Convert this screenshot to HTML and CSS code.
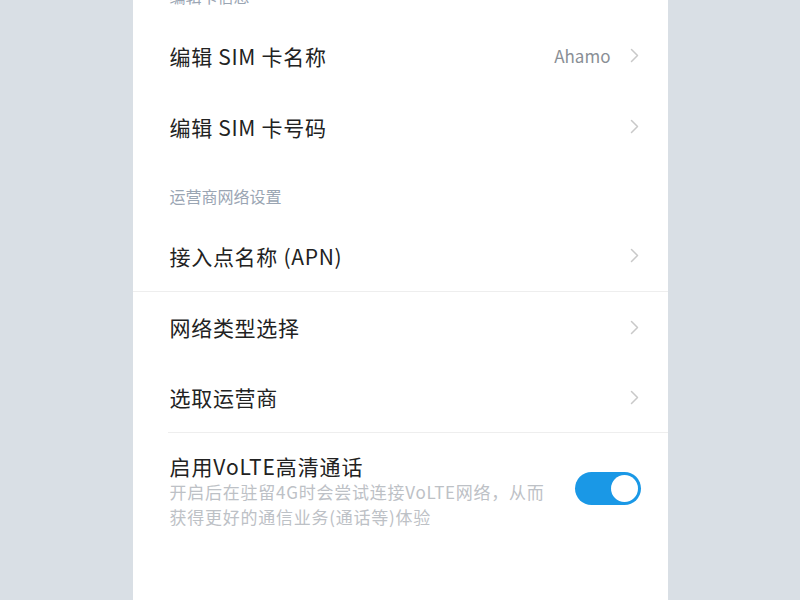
FILE: index.html
```html
<!DOCTYPE html>
<html lang="zh-CN">
<head>
<meta charset="utf-8">
<title>SIM 卡设置</title>
<link rel="stylesheet" href="styles.css">
</head>
<body>
<div class="panel">
  <div class="section">编辑卡信息</div>
  <div class="row">
    <span class="title">编辑 SIM 卡名称</span>
    <span class="value">Ahamo</span>
    <svg class="chev" viewBox="0 0 9 15" width="9" height="15"><path d="M1.5 1.5 L7.5 7.5 L1.5 13.5" /></svg>
  </div>
  <div class="row">
    <span class="title">编辑 SIM 卡号码</span>
    <svg class="chev" viewBox="0 0 9 15" width="9" height="15"><path d="M1.5 1.5 L7.5 7.5 L1.5 13.5" /></svg>
  </div>
  <div class="section">运营商网络设置</div>
  <div class="row">
    <span class="title">接入点名称 (APN)</span>
    <svg class="chev" viewBox="0 0 9 15" width="9" height="15"><path d="M1.5 1.5 L7.5 7.5 L1.5 13.5" /></svg>
  </div>
  <div class="divider"></div>
  <div class="row short">
    <span class="title">网络类型选择</span>
    <svg class="chev" viewBox="0 0 9 15" width="9" height="15"><path d="M1.5 1.5 L7.5 7.5 L1.5 13.5" /></svg>
  </div>
  <div class="row short">
    <span class="title">选取运营商</span>
    <svg class="chev" viewBox="0 0 9 15" width="9" height="15"><path d="M1.5 1.5 L7.5 7.5 L1.5 13.5" /></svg>
  </div>
  <div class="divider inset"></div>
  <div class="row-switch">
    <div class="texts">
      <div class="sw-title">启用VoLTE高清通话</div>
      <div class="sw-desc">开启后在驻留4G时会尝试连接VoLTE网络，从而<br>获得更好的通信业务(通话等)体验</div>
    </div>
    <div class="toggle"><div class="knob"></div></div>
  </div>
</div>
</body>
</html>
```

FILE: styles.css
```css
html, body {
  margin: 0;
  padding: 0;
  height: 100%;
  overflow: hidden;
}
body {
  background: #d9dfe5;
  font-family: "Noto Sans CJK SC", "Noto Sans", sans-serif;
}
.panel {
  width: 535px;
  margin: -38px auto 0;
  background: #ffffff;
  height: calc(100% + 38px);
}
.section {
  box-sizing: border-box;
  height: 58px;
  padding: 24px 0 0 37px;
  font-size: 16px;
  line-height: 21px;
  color: #9aa5b3;
}
.row {
  box-sizing: border-box;
  height: 71px;
  display: flex;
  align-items: center;
  padding: 0 29px 0 37px;
}
.row.short {
  height: 70px;
}
.title {
  flex: 1;
  font-size: 21px;
  letter-spacing: 0.7px;
  color: #222222;
}
.value {
  font-size: 17px;
  color: #8a8f96;
  margin-right: 19px;
}
.chev {
  display: block;
  fill: none;
  stroke: #c9c9c9;
  stroke-width: 1.5;
  stroke-linecap: round;
  stroke-linejoin: round;
}
.divider {
  height: 1px;
  background: #eeeeee;
}
.divider.inset {
  margin-left: 35px;
}
.row-switch {
  display: flex;
  align-items: flex-start;
  padding: 20px 27px 0 37px;
}
.texts {
  flex: 1;
}
.sw-title {
  font-size: 21px;
  line-height: 26px;
  letter-spacing: 0.9px;
  color: #222222;
}
.sw-desc {
  font-size: 17px;
  line-height: 25px;
  letter-spacing: 0.75px;
  color: #bdc1c6;
}
.toggle {
  box-sizing: border-box;
  width: 66px;
  height: 33px;
  margin-top: 19px;
  border-radius: 17px;
  background: #1a98e6;
  display: flex;
  justify-content: flex-end;
  align-items: center;
  padding: 0 3px;
}
.knob {
  width: 27px;
  height: 27px;
  border-radius: 50%;
  background: #ffffff;
}
```
